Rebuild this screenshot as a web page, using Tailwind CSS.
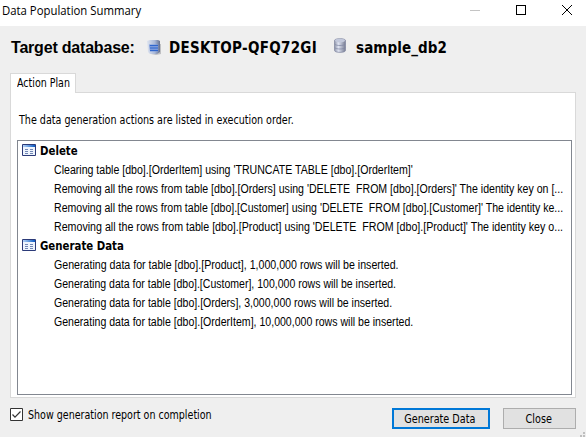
<!DOCTYPE html>
<html lang="en">
<head>
<meta charset="utf-8">
<title>Data Population Summary</title>
<script src="https://cdn.jsdelivr.net/npm/@tailwindcss/browser@4"></script>
</head>
<body class="w-[586px] h-[437px] overflow-hidden bg-[#efefef] text-black font-['DejaVu_Sans_Condensed','DejaVu_Sans',sans-serif] [font-stretch:condensed] text-[12px] whitespace-nowrap flex flex-col relative">
<svg class="absolute w-0 h-0">
  <defs>
    <linearGradient id="bar" x1="0" x2="1"><stop offset="0" stop-color="#b5d4f7"/><stop offset="1" stop-color="#0b5bc4"/></linearGradient>
    <linearGradient id="cyl" x1="0" x2="1"><stop offset="0" stop-color="#8e94a8"/><stop offset=".35" stop-color="#dfe4f2"/><stop offset="1" stop-color="#777c92"/></linearGradient>
    <linearGradient id="srv" x1="0" x2="1"><stop offset="0" stop-color="#dfe5f0"/><stop offset=".6" stop-color="#a9b8d8"/><stop offset="1" stop-color="#65708e"/></linearGradient>
    <symbol id="table" viewBox="0 0 14 12">
      <path fill="#eef4fd" stroke="#2b3a78" d="M.5.5h13v11H.5z"/>
      <path fill="url(#bar)" d="M1 1h12v2H1z"/>
      <path stroke="#7187b5" d="M3 5.500h3M8 5.500h3M3 7.500h3M8 7.500h3M3 9.500h3M8 9.500h3"/>
    </symbol>
  </defs>
</svg>
<header class="h-[26px] shrink-0 bg-white flex items-start pl-[2px] pr-[14px] font-['Open_Sans',sans-serif] [font-stretch:normal] text-[12px] leading-[22px]">
  <span class="inline-block origin-left scale-x-[.946]">Data Population Summary</span>
  <svg class="ml-auto mt-[5px] w-[102px] h-[10px]" viewBox="0 0 102 10" fill="none"><path stroke="#c4c4c4" d="M0 5.500h10"/><path stroke="#000" shape-rendering="crispEdges" d="M46.500 .5h9v9h-9z"/><path stroke="#000" d="M92 0l10 10M102 0L92 10"/></svg>
</header>
<section class="h-[47px] shrink-0 flex items-start pl-[11px] pt-[12px] font-bold leading-[20px] text-[15px]">
  <span class="w-[136px] font-['Liberation_Sans',sans-serif] text-[16px] leading-[19px] tracking-[-.2px]">Target database:</span>
  <svg class="w-[14px] h-[15px] mt-[2px]" viewBox="0 0 14 15"><path fill="#777b82" opacity=".4" d="M4 4h10v10l-5 1-5-1z"/><path fill="url(#srv)" d="M0 1l3-1h8l2 1v11l-3 2H3l-2-2z"/><path fill="#7d9bdc" d="M2 4.500h9v7H3z"/><path stroke="#2f66cc" d="M3 5.500h8M3 8h8M3 10.500h8"/></svg>
  <span class="ml-[8px] w-[165px] tracking-[.3px]">DESKTOP-QFQ72GI</span>
  <svg class="w-[12px] h-[15px]" viewBox="0 0 12 15"><path fill="url(#cyl)" stroke="#8186a0" stroke-width=".7" d="M.5 2.500C.5 0 11.500 0 11.500 2.500v10c0 2.500-11 2.500-11 0z"/><ellipse cx="6" cy="2.600" rx="5" ry="1.800" fill="#c2c8db"/><path fill="none" stroke="#7d84a0" stroke-width=".7" d="M.7 6c1 2 9.600 2 10.600 0M.7 9.500c1 2 9.600 2 10.600 0"/></svg>
  <span class="ml-[10px] tracking-[.1px]">sample_db2</span>
</section>
<main class="relative mx-[10px] mt-[19px] w-[566px] h-[306px] shrink-0 bg-white border border-[#d9d9d9] px-[6px] pt-[19px]">
  <div class="absolute -left-px -top-[20px] w-[66px] h-[20px] bg-white border border-b-0 border-[#d9d9d9] pl-[6px] leading-[19px]"><span class="inline-block origin-left scale-x-[.88]">Action Plan</span></div>
  <p class="h-[28px] pl-[2px] leading-[17px]"><span class="inline-block origin-left scale-x-[.887]">The data generation actions are listed in execution order.</span></p>
  <div class="w-[555px] h-[255px] overflow-hidden border border-[#828790] font-['Liberation_Sans',sans-serif] text-[12px] leading-[19px]">
    <div class="h-[19px] flex items-start pl-[4px] font-['DejaVu_Sans_Condensed','DejaVu_Sans',sans-serif] font-bold"><svg class="w-[14px] h-[12px] mt-[3px]"><use href="#table"/></svg><span class="ml-[4px] mt-px inline-block origin-left scale-x-[.945]">Delete</span></div>
    <ul class="pl-[36px] w-[553px] h-[76px] pt-px">
      <li class="h-[19px]"><span class="inline-block origin-left scale-x-[.882]">Clearing table [dbo].[OrderItem] using 'TRUNCATE TABLE [dbo].[OrderItem]'</span></li>
      <li class="h-[19px]"><span class="inline-block origin-left scale-x-[.882]">Removing all the rows from table [dbo].[Orders] using 'DELETE&nbsp; FROM [dbo].[Orders]' The identity key on [...</span></li>
      <li class="h-[19px]"><span class="inline-block origin-left scale-x-[.88]">Removing all the rows from table [dbo].[Customer] using 'DELETE&nbsp; FROM [dbo].[Customer]' The identity ke...</span></li>
      <li class="h-[19px]"><span class="inline-block origin-left scale-x-[.888]">Removing all the rows from table [dbo].[Product] using 'DELETE&nbsp; FROM [dbo].[Product]' The identity key o...</span></li>
    </ul>
    <div class="h-[19px] flex items-start pl-[4px] font-['DejaVu_Sans_Condensed','DejaVu_Sans',sans-serif] font-bold"><svg class="w-[14px] h-[12px] mt-[3px]"><use href="#table"/></svg><span class="ml-[4px] mt-px inline-block origin-left scale-x-[.945]">Generate Data</span></div>
    <ul class="pl-[36px] pt-px">
      <li class="h-[19px]"><span class="inline-block origin-left scale-x-[.886]">Generating data for table [dbo].[Product], 1,000,000 rows will be inserted.</span></li>
      <li class="h-[19px]"><span class="inline-block origin-left scale-x-[.878]">Generating data for table [dbo].[Customer], 100,000 rows will be inserted.</span></li>
      <li class="h-[19px]"><span class="inline-block origin-left scale-x-[.88]">Generating data for table [dbo].[Orders], 3,000,000 rows will be inserted.</span></li>
      <li class="h-[19px]"><span class="inline-block origin-left scale-x-[.88]">Generating data for table [dbo].[OrderItem], 10,000,000 rows will be inserted.</span></li>
    </ul>
  </div>
</main>
<footer class="flex items-start pl-[10px] pt-[10px]">
  <svg class="w-[13px] h-[13px]" viewBox="0 0 13 13"><path fill="#fff" stroke="#333" d="M.5.5h12v12H.5z"/><path fill="none" stroke="#333" stroke-width="1.200" d="M2.500 6.500l2.500 2.700 5.500-5.700"/></svg>
  <span class="ml-[5px] leading-[14px] w-[364px]"><span class="inline-block origin-left scale-x-[.882]">Show generation report on completion</span></span>
  <button class="w-[98px] h-[21px] border-2 border-[#0078d7] bg-[#e1e1e1] text-center leading-[17px]"><span class="inline-block scale-x-[.892] translate-y-px -translate-x-px">Generate Data</span></button>
  <button class="ml-[13px] w-[73px] h-[21px] border border-[#adadad] bg-[#e1e1e1] text-center leading-[19px]"><span class="inline-block scale-x-[.892] translate-y-px -translate-x-px">Close</span></button>
</footer>
<svg class="absolute right-0 bottom-0 w-[6px] h-[5px]" viewBox="0 0 6 5" fill="#bfbfbf"><path d="M3 0h2v2H3zM0 3h2v2H0zM3 3h2v2H3z"/></svg>
</body>
</html>
